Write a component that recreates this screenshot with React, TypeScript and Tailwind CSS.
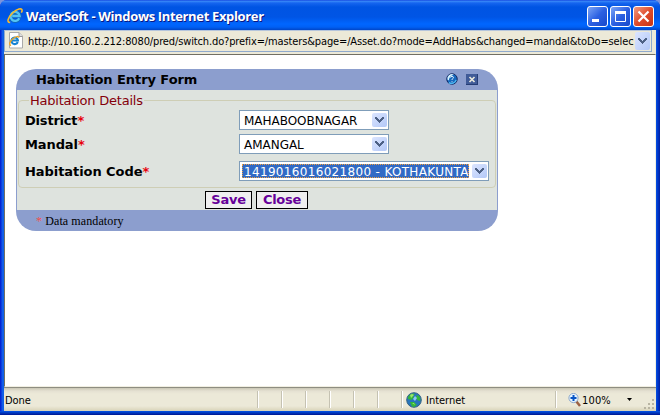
import React from "react";

const verdana = "font-['DejaVu_Sans',sans-serif]";
const tahoma = "font-['DejaVu_Sans_Condensed','DejaVu_Sans',sans-serif] [font-stretch:condensed]";

function IELogo({ size }: { size: number }) {
  return (
    <svg width={size} height={size} viewBox="0 0 16 16" fill="none" className="shrink-0">
      <path d="M12.4 10.4A4.6 4.6 0 1 1 12.8 8H5" stroke="#1267b5" strokeWidth="3.6" />
      <path d="M12.2 10.3A4.5 4.5 0 1 1 12.6 8H5.2" stroke="#54c3f5" strokeWidth="2.3" />
      <path d="M3.2 14.4C-.6 14.8.8 9.5 5.6 5 10 .8 15-.4 15.1 2.4c0 .7-.3 1.5-.8 2.3" stroke="#f6b92d" strokeWidth="1.6" />
    </svg>
  );
}

function Chevron() {
  return (
    <span className="flex w-[15px] shrink-0 items-center justify-center rounded-[2px] bg-linear-to-br from-[#dbe5ff] to-[#b3c8f7]">
      <svg width="9" height="6" viewBox="0 0 9 6" shapeRendering="crispEdges">
        <path d="M0 0h2v1h1v1h1v1h1V2h1V1h1V0h2v2H8v1H7v1H6v1H5v1H4V5H3V4H2V3H1V2H0z" fill="#4d6185" />
      </svg>
    </span>
  );
}

function Select({ value, width, focused }: { value: string; width: string; focused?: boolean }) {
  return (
    <div className={`${width} flex h-5 border border-[#7f9db9] bg-white p-[2px] pr-px text-[12px] ${verdana}`}>
      <span
        className={`min-w-0 flex-1 overflow-hidden whitespace-nowrap ${
          focused
            ? "mr-[3px] border border-dotted border-[#f0a040] bg-[#316ac5] pl-px leading-[14px] tracking-[0.33px] text-white"
            : "pl-[2px] leading-[16px] tracking-[-0.03px] text-black"
        }`}
      >
        {value}
      </span>
      <Chevron />
    </div>
  );
}

function Label({ children, tracking }: { children: string; tracking: string }) {
  return (
    <span className={`w-[214px] text-[13px] font-bold leading-[22px] ${tracking}`}>
      {children}
      <span className="text-red-600">*</span>
    </span>
  );
}

function CaptionButton({ kind }: { kind: "min" | "max" | "close" }) {
  const close = kind === "close";
  return (
    <span
      className={`flex h-[21px] w-[21px] items-center justify-center rounded-[3px] border border-white ${
        close ? "bg-linear-to-br from-[#f09a80] via-[#df4c2c] to-[#c73313]" : "bg-linear-to-br from-[#7da4f5] via-[#2c60e2] to-[#1748cb]"
      }`}
    >
      <svg width="19" height="19" viewBox="0 0 19 19" fill="none">
        {kind === "min" && <path d="M4 12h7v3H4z" fill="#fff" />}
        {kind === "max" && <path d="M4.5 4v10.5h10V4" stroke="#fff" strokeWidth="1" />}
        {kind === "max" && <path d="M4 4h11v3H4z" fill="#fff" />}
        {close && <path d="M4.5 4.5l10 10m0-10l-10 10" stroke="#fff" strokeWidth="2.2" />}
      </svg>
    </span>
  );
}

function TitleBar() {
  return (
    <header className="flex h-[30px] items-center bg-[linear-gradient(#0831d9_0,#3c8cf8_1px,#1665ef_3px,#0054e3_7px,#0055e5_17px,#0066ff_24px,#0060f5_27px,#0046c8_30px)] pl-[7px] pr-[6px] pt-[2px]">
      <IELogo size={16} />
      <h1 className="ml-[3px] flex-1 whitespace-nowrap pt-px font-['Open_Sans',sans-serif] text-[13px] font-bold tracking-[-0.35px] text-white [text-shadow:1px_1px_0_#0a1883]">
        WaterSoft - Windows Internet Explorer
      </h1>
      <div className="flex gap-[2px]">
        <CaptionButton kind="min" />
        <CaptionButton kind="max" />
        <CaptionButton kind="close" />
      </div>
    </header>
  );
}

function AddressBar() {
  return (
    <div className="h-6 bg-[#ece9d8] pr-1">
      <div className="flex h-[22px] border border-[#8fa9cc] border-t-[#b5c5dc] bg-[#ece9d8] py-[1px] pl-[4px] pr-[1px]">
        <svg width="14" height="17" viewBox="0 0 14 17" className="shrink-0">
          <path d="M.5.5h9.5l3.5 3.5v12H.5z" fill="#fff" stroke="#aaa" />
          <path d="M10 .5v4h3.5" fill="#ddd" stroke="#999" />
          <g transform="translate(0 3) scale(.7)" fill="none">
            <path d="M12.5 10A4.7 4.7 0 1 1 12.8 7.8H5" stroke="#1683d2" strokeWidth="3" />
            <path d="M3 15C-1 14 2 8 6 5s8-4 8-1" stroke="#f2a51f" strokeWidth="2" />
          </g>
        </svg>
        <span className={`ml-[5px] h-[18px] flex-1 overflow-hidden whitespace-nowrap text-[11px] leading-[20px] tracking-[-0.13px] text-black ${tahoma}`}>
          http://10.160.2.212:8080/pred/switch.do?prefix=/masters&amp;page=/Asset.do?mode=AddHabs&amp;changed=mandal&amp;toDo=selec
        </span>
        <span className="ml-[1px] flex"><Chevron /></span>
      </div>
    </div>
  );
}

function HabitationForm() {
  return (
    <section className={`h-[162px] w-[482px] overflow-hidden rounded-[20px] bg-[#8c9ece] text-black ${verdana}`}>
      <div className="flex h-[21px] items-center pl-5 pr-[20px]">
        <h2 className="flex-1 text-[13px] font-bold leading-5 tracking-[-0.07px]">Habitation Entry Form</h2>
        <svg width="12" height="12" viewBox="0 0 13 13" className="mb-[2px] mr-[8px]">
          <circle cx="6.5" cy="6.5" r="5.7" fill="#1668bd" stroke="#10245c" />
          <path d="M1.5 7a5 5 0 0 1 7-5.3C5 3 4 4 3 8z" fill="#d5f3ff" />
          <path d="M3 10.5c3 2 7 .5 8-3" fill="none" stroke="#4db9f2" strokeWidth="1.5" />
          <path d="M5 5c0-2 3-2 3 0 0 1-1.5 1-1.5 2.5M6.5 9v1" fill="none" stroke="#fff" />
        </svg>
        <svg width="12" height="11" viewBox="0 0 12 11">
          <path d="M0 0h12v11H0z" fill="#405b98" />
          <path d="M0 10.5h12M11.5 0v11" stroke="#253d75" />
          <path d="M3.5 3l5 5m0-5l-5 5" stroke="#e8e8dc" strokeWidth="1.7" />
        </svg>
      </div>
      <div className="mx-px flex h-[120px] flex-col bg-[#dee3de] px-px pt-[2px]">
        <fieldset className="h-[96px] min-w-0 rounded-[4px] border border-[#ceceb5] px-[6px]">
          <legend className="ml-[4px] px-[1px] text-[13px] leading-[17px] tracking-[-0.22px] text-[#84000a]">Habitation Details</legend>
          <div className="flex h-6 items-start pt-px">
            <Label tracking="tracking-[-0.2px]">District</Label>
            <Select value="MAHABOOBNAGAR" width="w-[150px]" />
          </div>
          <div className="flex h-[27px] items-start pt-px">
            <Label tracking="tracking-[-0.1px]">Mandal</Label>
            <Select value="AMANGAL" width="w-[150px]" />
          </div>
          <div className="flex items-start pt-px">
            <Label tracking="tracking-[-0.06px]">Habitation Code</Label>
            <Select value="1419016016021800 - KOTHAKUNTA" width="w-[250px]" focused />
          </div>
        </fieldset>
        <div className="flex gap-1 pl-[187px] pt-[3px] text-[13px] font-bold tracking-[-0.25px] text-[#660099]">
          <button className="h-[18px] w-[47px] border border-black bg-[#efefef] leading-[16px]">Save</button>
          <button className="h-[18px] w-[52px] border border-black bg-[#efefef] leading-[16px]">Close</button>
        </div>
      </div>
      <p className="pl-5 font-['Liberation_Serif',serif] text-[12px] leading-[22px] tracking-[0.1px]">
        <span className="text-[#f05050]">*</span> Data mandatory
      </p>
    </section>
  );
}

function Globe() {
  return (
    <svg width="16" height="16" viewBox="0 0 16 16">
      <circle cx="8" cy="8" r="7.3" fill="#2875bd" stroke="#366383" />
      <path d="M2 5c2-4 6-4 7-3L7 4l1 2-3 2-3-1zM11 3c3 1 4 4 3 6l-3-1-1-3zM4 10l4 0 3 3-3 2c-2 0-3-2-4-5z" fill="#35b63c" />
      <path d="M4 3l2-1 2 1-3 3zM6 11l2 0 1 2z" fill="#9be66b" />
      <path d="M9 4l2 2-2 3-2-2z" fill="#8bc9f4" />
    </svg>
  );
}

function StatusBar() {
  return (
    <footer className={`flex h-[24px] items-center border-t border-[#8e8d81] bg-[linear-gradient(#c9c6b5_0,#e5e1d2_3px,#ece9d8_6px,#ece9d8_18px,#d8d3b8_23px)] text-[11px] leading-4 text-black ${tahoma}`}>
      <span className="w-[253px] pl-px pt-[2px] tracking-[-0.1px]">Done</span>
      {[0, 1, 2, 3, 4, 5, 6].map((n) => (
        <span key={n} className={`h-[17px] border-l border-l-[#c5c2b2] ${n === 6 ? "w-[5px]" : "w-6"}`}>
          <span className="block h-full w-px bg-white" />
        </span>
      ))}
      <Globe />
      <span className="ml-[4px] w-[129px] pt-[2px] tracking-[-0.02px]">Internet</span>
      <span className="flex h-[17px] w-[13px] border-l border-[#c5c2b2]"><span className="w-px bg-white" /></span>
      <svg width="13" height="14" viewBox="0 0 13 14">
        <path d="M8 8l4 5" stroke="#9c6143" strokeWidth="2.5" />
        <circle cx="5.5" cy="5" r="4.6" fill="#e7f5ff" stroke="#8ba7cb" />
        <path d="M5.5 2v6M2.5 5h6" stroke="#0754c5" strokeWidth="2" />
      </svg>
      <span className="ml-[1px] w-[45px] pt-[2px] tracking-[0.15px]">100%</span>
      <svg width="5" height="3" viewBox="0 0 5 3"><path d="M0 0h5L2.5 3z" fill="#000" /></svg>
      <svg width="12" height="12" viewBox="0 0 12 12" className="ml-auto mr-[1px] mt-[9px]" shapeRendering="crispEdges">
        <path d="M9 1h2v2H9zM5 5h2v2H5zM9 5h2v2H9zM1 9h2v2H1zM5 9h2v2H5zM9 9h2v2H9z" fill="#b8b4a2" />
      </svg>
    </footer>
  );
}

export default function App() {
  return (
    <main className="h-[415px] w-[660px] bg-[#7b93dd]">
      <div className="flex h-full flex-col overflow-hidden rounded-t-[7px] bg-[linear-gradient(90deg,#0019cf_0,#0831d9_1px,#166aee_3px,#0855dd_4px,#0855dd_656px,#0040d9_657px,#001ea0_660px)]">
        <TitleBar />
        <div className="mx-1 flex min-h-0 flex-1 flex-col">
          <AddressBar />
          <div className="min-h-0 flex-1 border-b border-r border-[#f1efe2] border-l border-l-[#716f64] bg-white pl-[11px] pt-[14px] [border-top:1px_solid_#716f64]">
            <HabitationForm />
          </div>
          <StatusBar />
        </div>
        <div className="h-1 bg-linear-to-b from-[#0855e8] to-[#001590]" />
      </div>
    </main>
  );
}
